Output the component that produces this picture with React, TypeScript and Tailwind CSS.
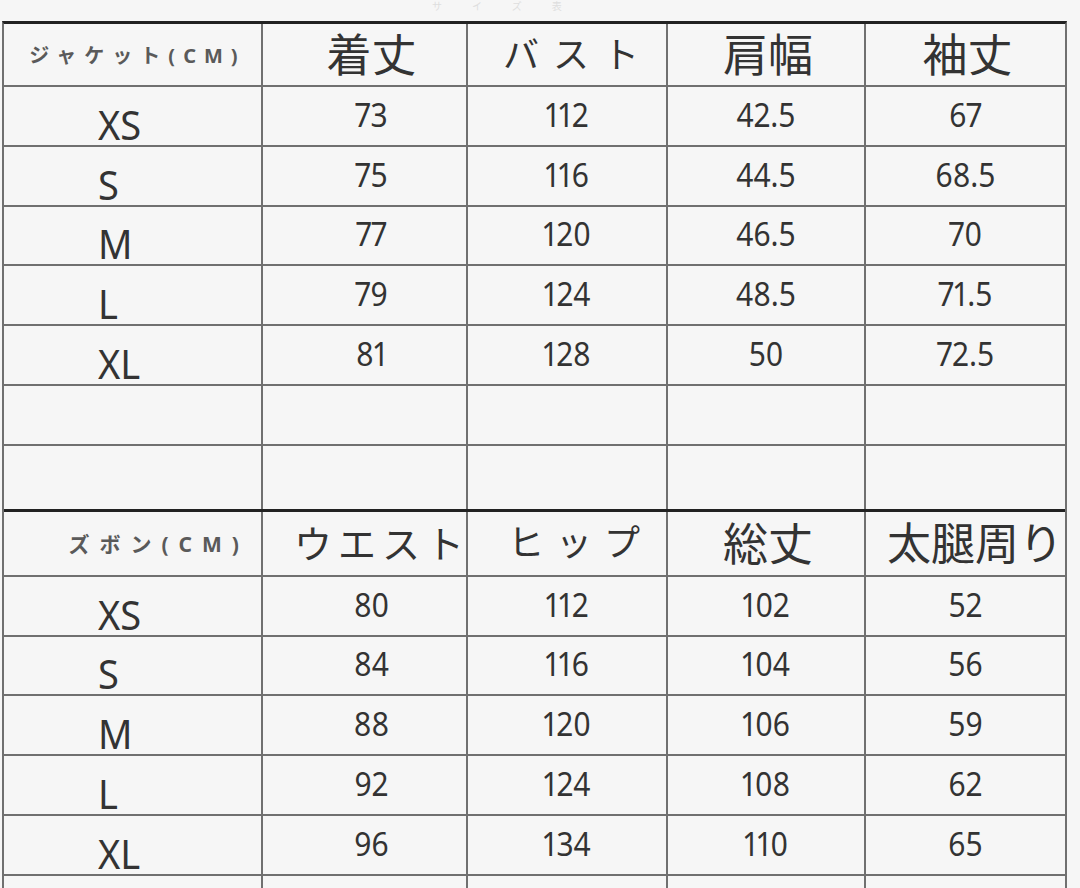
const jacket = [
  ["XS", "73", "112", "42.5", "67"],
  ["S", "75", "116", "44.5", "68.5"],
  ["M", "77", "120", "46.5", "70"],
  ["L", "79", "124", "48.5", "71.5"],
  ["XL", "81", "128", "50", "72.5"],
];

const pants = [
  ["XS", "80", "112", "102", "52"],
  ["S", "84", "116", "104", "56"],
  ["M", "88", "120", "106", "59"],
  ["L", "92", "124", "108", "62"],
  ["XL", "96", "134", "110", "65"],
];

const grid = "grid grid-cols-[259px_205px_200px_198px_199px]";
const cell = "flex items-center justify-center border-r-2 border-[#707070] last:border-r-0";

function DataRow({ row }: { row: string[] }) {
  return (
    <div className={`${grid} h-[59.8px] border-b-2 border-[#707070]`}>
      <div className={`${cell} !justify-start pl-[94px] pt-[16px]`}>
        <span className="inline-block scale-y-[1.05] text-[38px] leading-none">{row[0]}</span>
      </div>
      {row.slice(1).map((v, i) => (
        <div key={i} className={`${cell} ${i === 0 ? "pl-[14px]" : ""} pb-[2px]`}>
          <span className="inline-block scale-y-[1.12] text-[30px] leading-none proportional-nums">{v}</span>
        </div>
      ))}
    </div>
  );
}

function EmptyRow({ last }: { last?: boolean }) {
  return (
    <div className={`${grid} ${last ? "h-[63px]" : "h-[59.8px] border-b-2 border-[#707070]"}`}>
      {[0, 1, 2, 3, 4].map((i) => (
        <div key={i} className={cell}></div>
      ))}
    </div>
  );
}

export default function App() {
  return (
    <div
      className="h-[888px] w-[1080px] overflow-hidden bg-[#f6f6f6] pl-[2px] text-[#333]"
      style={{ fontFamily: '"Noto Sans", "Noto Sans CJK JP", sans-serif' }}
    >
      <div className="h-[21px]">
        <p className="ml-[430px] text-[10px] leading-[12px] tracking-[30px] text-[#dedede]">サイズ表</p>
      </div>
      <div className="w-[1065px] border-x-2 border-t-[3px] border-x-[#707070] border-t-[#222]">
        {/* jacket header */}
        <div className={`${grid} h-[63px] border-b-2 border-[#707070]`}>
          <div className={`${cell} pl-[10px] pt-[2px]`}>
            <span className="text-[20px] font-bold tracking-[8px] text-[#5a5a5a]">ジャケット(CM)</span>
          </div>
          <div className={`${cell} pl-[14px]`}>
            <span className="text-[45px] leading-none">着丈</span>
          </div>
          <div className={`${cell} pl-[22px]`}>
            <span className="text-[36px] tracking-[14px] leading-none">バスト</span>
          </div>
          <div className={`${cell} pl-[4px]`}>
            <span className="text-[45px] leading-none">肩幅</span>
          </div>
          <div className={`${cell} pl-[4px]`}>
            <span className="text-[45px] leading-none">袖丈</span>
          </div>
        </div>
        {jacket.map((r) => (
          <DataRow key={r[0]} row={r} />
        ))}
        <EmptyRow />
        <EmptyRow last />

        {/* pants header */}
        <div className={`${grid} h-[66px] border-t-[3px] border-t-[#222]`}>
          <div className={`${cell} !justify-end pr-[12px] pt-[2px]`}>
            <span className="text-[21px] font-bold tracking-[10px] text-[#5a5a5a]">ズボン(CM)</span>
          </div>
          <div className={`${cell} !justify-end`}>
            <span className="mr-[-4px] text-[38px] tracking-[6px] leading-none">ウエスト</span>
          </div>
          <div className={`${cell} !justify-end pr-[14px]`}>
            <span className="text-[36px] tracking-[12px] leading-none">ヒップ</span>
          </div>
          <div className={`${cell} pl-[4px]`}>
            <span className="text-[45px] leading-none">総丈</span>
          </div>
          <div className={`${cell} !justify-end`}>
            <span className="mr-[2px] text-[44px] leading-none">太腿周り</span>
          </div>
        </div>
        <div className="border-t-2 border-[#707070]"></div>
        {pants.map((r) => (
          <DataRow key={r[0]} row={r} />
        ))}
        <EmptyRow />
      </div>
    </div>
  );
}
